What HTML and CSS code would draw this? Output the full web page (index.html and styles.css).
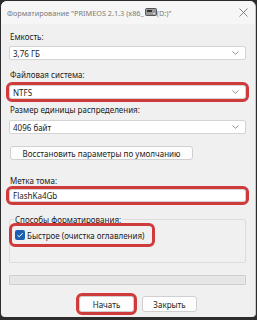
FILE: index.html
```html
<!DOCTYPE html>
<html lang="ru">
<head>
<meta charset="utf-8">
<link rel="stylesheet" href="styles.css">
</head>
<body>
<div class="window">
  <div class="titlebar">
    <span class="title">Форматирование "PRIMEOS 2.1.3 (x86_<svg class="drive" width="12" height="9" viewBox="0 0 12 9"><rect x="0.5" y="0.5" width="11" height="7" rx="1" fill="#9a9a9a" stroke="#555"/><rect x="2" y="2" width="5" height="2" fill="#333"/><rect x="8" y="5" width="2" height="1" fill="#e6e6e6"/></svg>(D:)"</span>
    <svg class="close" width="9" height="9" viewBox="0 0 9 9"><path d="M0.5 0.5L8.5 8.5M8.5 0.5L0.5 8.5" stroke="#777" stroke-width="0.9"/></svg>
  </div>
  <div class="content">
    <div class="label l1">Емкость:</div>
    <div class="select"><span>3,76 ГБ</span><svg class="chev" width="7" height="4" viewBox="0 0 7 4"><path d="M0.5 0.5L3.5 3.3L6.5 0.5" fill="none" stroke="#777" stroke-width="0.8"/></svg></div>
    <div class="label l2">Файловая система:</div>
    <div class="select hl"><span>NTFS</span><svg class="chev" width="7" height="4" viewBox="0 0 7 4"><path d="M0.5 0.5L3.5 3.3L6.5 0.5" fill="none" stroke="#777" stroke-width="0.8"/></svg></div>
    <div class="label l3">Размер единицы распределения:</div>
    <div class="select"><span>4096 байт</span><svg class="chev" width="7" height="4" viewBox="0 0 7 4"><path d="M0.5 0.5L3.5 3.3L6.5 0.5" fill="none" stroke="#777" stroke-width="0.8"/></svg></div>
    <div class="btn restore">Восстановить параметры по умолчанию</div>
    <div class="label l4">Метка тома:</div>
    <div class="input hl">FlashKa4Gb</div>
    <fieldset class="group">
      <legend>Способы форматирования:</legend>
      <div class="check hl"><span class="box"><svg width="8" height="8" viewBox="0 0 8 8"><path d="M1.5 4.2L3.2 5.8L6.6 2.2" fill="none" stroke="#fff" stroke-width="1"/></svg></span><span>Быстрое (очистка оглавления)</span></div>
    </fieldset>
    <div class="progress"></div>
    <div class="buttons">
      <div class="btn action hl">Начать</div>
      <div class="btn action">Закрыть</div>
    </div>
  </div>
</div>
</body>
</html>
```
FILE: styles.css
```css
html, body {
  margin: 0;
  padding: 0;
  background: #2c2c2c;
  width: 257px;
  height: 320px;
  overflow: hidden;
}
body {
  font-family: "Noto Sans", "Open Sans", sans-serif;
  font-size: 8px;
  color: #1b1b1b;
}
.window {
  margin: 1px 1px 0 1px;
  width: 254px;
  height: 316px;
  background: #f0f0f0;
  border-radius: 6px 6px 4px 4px;
  border-right: 1px solid #c8c8c8;
  overflow: hidden;
}
.titlebar {
  height: 23px;
  background: #f6f6f6;
  display: flex;
  align-items: center;
  padding: 0 6px 0 6px;
  justify-content: space-between;
}
.title {
  color: #7a7a7a;
  font-size: 7.3px;
  display: flex;
  align-items: center;
  white-space: nowrap;
}
.drive { margin: 0 0 0 1px; }
.close { margin-right: 1px; }
.content {
  padding: 0 8px 0 8px;
  display: flex;
  flex-direction: column;
}
.label {
  height: 11px;
  line-height: 11px;
  padding-left: 1px;
}
.l1 { margin-top: 7px; margin-bottom: 4px; }
.l2 { margin-top: 9px; margin-bottom: 5px; }
.l3 { margin-top: 5px; margin-bottom: 5px; }
.l4 { margin-top: 15px; margin-bottom: 3px; }
.select, .input {
  height: 14px;
  background: #fff;
  border: 1px solid #d4d4d4;
  border-radius: 2px;
  display: flex;
  align-items: center;
  justify-content: space-between;
  padding: 0 6px 0 3px;
  box-sizing: border-box;
  width: 237px;
  flex: none;
}
.input { justify-content: flex-start; height: 13px; }
.hl {
  outline: 3px solid #cf3b3b;
  outline-offset: 0px;
}
.select.hl, .input.hl { border-radius: 3px; }
.btn {
  background: #fdfdfd;
  border: 1px solid #d0d0d0;
  border-radius: 3px;
  box-sizing: border-box;
  display: flex;
  align-items: center;
  justify-content: center;
  flex: none;
}
.restore {
  width: 183px;
  height: 14px;
  margin-top: 12px;
  margin-left: 1px;
}
.group {
  margin: 12px 0 0 0;
  padding: 0;
  border: 1px solid #dcdcdc;
  border-radius: 2px;
  height: 49px;
  box-sizing: border-box;
  width: 237px;
  flex: none;
}
.group legend {
  padding: 0 1px;
  margin-left: 4px;
  line-height: 11px;
}
.check {
  margin: 1px 0 0 2px;
  width: 140px;
  height: 18px;
  display: flex;
  align-items: center;
  gap: 2px;
  border-radius: 3px;
  padding-left: 3px;
  box-sizing: border-box;
}
.box {
  width: 10px;
  height: 10px;
  background: #1b5fb1;
  border-radius: 2px;
  display: flex;
  align-items: center;
  justify-content: center;
}
.progress {
  margin-top: 12px;
  height: 10px;
  width: 237px;
  box-sizing: border-box;
  background: #e6e6e6;
  border: 1px solid #cfcfcf;
  border-radius: 1px;
  flex: none;
}
.buttons {
  display: flex;
  justify-content: flex-start;
  gap: 8px;
  margin-top: 11px;
  padding-left: 70px;
}
.action {
  width: 55px;
  height: 16px;
}
```
